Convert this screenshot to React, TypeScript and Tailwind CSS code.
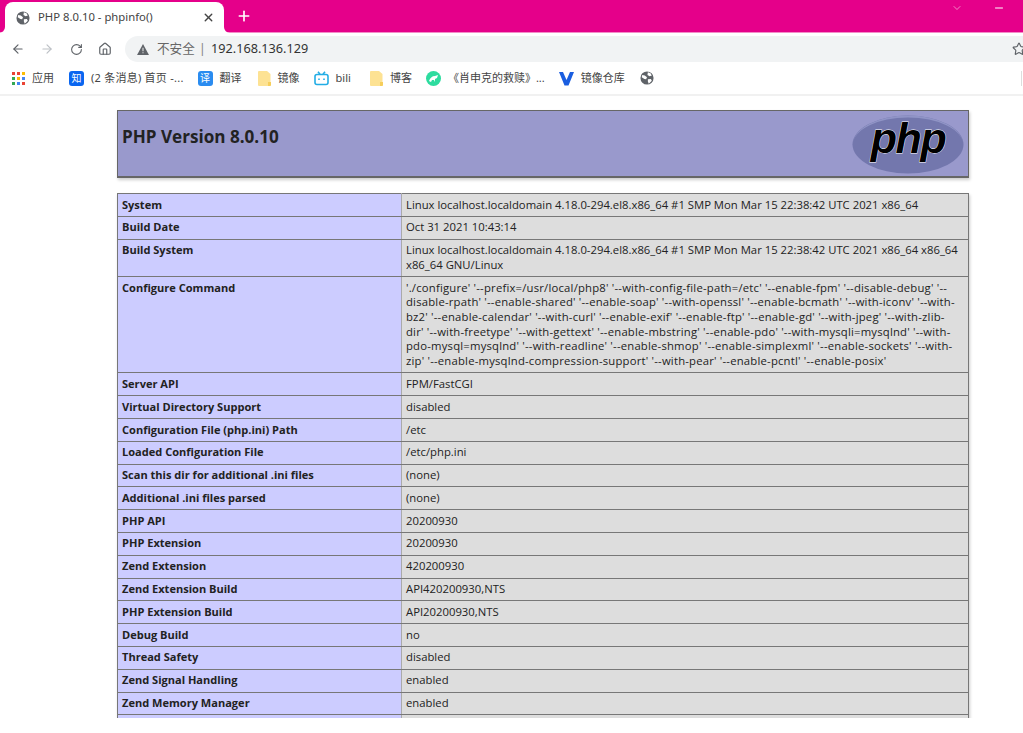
import React from "react";
import { ArrowLeft, ArrowRight, RotateCw, Home, Star, Plus, X, Minus, ChevronDown } from "lucide-react";

const cjk = "font-['Noto_Sans','Noto_Sans_CJK_SC',sans-serif]";

const rows: [string, string][] = [
  ["System", "Linux localhost.localdomain 4.18.0-294.el8.x86_64 #1 SMP Mon Mar 15 22:38:42 UTC 2021 x86_64"],
  ["Build Date", "Oct 31 2021 10:43:14"],
  ["Build System", "Linux localhost.localdomain 4.18.0-294.el8.x86_64 #1 SMP Mon Mar 15 22:38:42 UTC 2021 x86_64 x86_64 x86_64 GNU/Linux"],
  ["Configure Command", "'./configure' '--prefix=/usr/local/php8' '--with-config-file-path=/etc' '--enable-fpm' '--disable-debug' '--disable-rpath' '--enable-shared' '--enable-soap' '--with-openssl' '--enable-bcmath' '--with-iconv' '--with-bz2' '--enable-calendar' '--with-curl' '--enable-exif' '--enable-ftp' '--enable-gd' '--with-jpeg' '--with-zlib-dir' '--with-freetype' '--with-gettext' '--enable-mbstring' '--enable-pdo' '--with-mysqli=mysqlnd' '--with-pdo-mysql=mysqlnd' '--with-readline' '--enable-shmop' '--enable-simplexml' '--enable-sockets' '--with-zip' '--enable-mysqlnd-compression-support' '--with-pear' '--enable-pcntl' '--enable-posix'"],
  ["Server API", "FPM/FastCGI"],
  ["Virtual Directory Support", "disabled"],
  ["Configuration File (php.ini) Path", "/etc"],
  ["Loaded Configuration File", "/etc/php.ini"],
  ["Scan this dir for additional .ini files", "(none)"],
  ["Additional .ini files parsed", "(none)"],
  ["PHP API", "20200930"],
  ["PHP Extension", "20200930"],
  ["Zend Extension", "420200930"],
  ["Zend Extension Build", "API420200930,NTS"],
  ["PHP Extension Build", "API20200930,NTS"],
  ["Debug Build", "no"],
  ["Thread Safety", "disabled"],
  ["Zend Signal Handling", "enabled"],
  ["Zend Memory Manager", "enabled"],
  ["\u00a0", "\u00a0"],
];

const Globe = ({ size = 14 }: { size?: number }) => (
  <svg width={size} height={size} viewBox="0 0 16 16">
    <circle cx="8" cy="8" r="7.5" fill="#5f6368" />
    <path d="M2.5 4.5l3 .5 2.5 2-1 2.5-2-.5-3-2zM9 1.5l3 1 1.5 2.5-2.5 1-2.5-1.5zM9 9.5l3.5-.5 1 2-3.5 3.5-1-2.5z" fill="#fff" />
  </svg>
);

const Folder = () => (
  <svg width="13" height="15" viewBox="0 0 13 15">
    <path d="M1 0h8l3.5 3v11a1 1 0 0 1-1 1H1a1 1 0 0 1-1-1V1a1 1 0 0 1 1-1z" fill="#fde293" />
    <path d="M10 11h3v3a1 1 0 0 1-1 1h-2z" fill="#f6ce5b" />
  </svg>
);

const Apps = () => (
  <div className="grid grid-cols-3 gap-[2px] w-[13px]">
    {["#ea4335", "#ea4335", "#fbbc04", "#34a853", "#fbbc04", "#4285f4", "#34a853", "#4285f4", "#ea4335"].map((c, i) => (
      <span key={i} className="w-[3px] h-[3px]" style={{ background: c }} />
    ))}
  </div>
);

const Square = ({ text, color }: { text: string; color: string }) => (
  <span className={`w-[15px] h-[15px] rounded-[3px] text-white text-[10px] leading-[15px] text-center ${color}`}>{text}</span>
);

const Bili = () => (
  <svg width="15" height="15" viewBox="0 0 15 15" fill="none" stroke="#23ade5" strokeWidth="1.6">
    <rect x="1" y="3.5" width="13" height="10" rx="2" />
    <path d="M4 .8l2 2.4M11 .8L9 3.2M5 7.5v1.5M10 7.5v1.5" />
  </svg>
);

const Mint = () => (
  <svg width="15" height="15" viewBox="0 0 15 15">
    <circle cx="7.5" cy="7.5" r="7.5" fill="#2ddc9f" />
    <path d="M3 10c1-3 3-5 6-5l3-1-1 3-2 1 0 3-1-2-2 0-1 2z" fill="#fff" />
  </svg>
);

const Vee = () => (
  <svg width="15" height="15" viewBox="0 0 15 15">
    <path d="M0 1h4l3.5 8L11 1h4L9.5 14.5h-4z" fill="#1a5ee0" />
  </svg>
);

const Bookmark = ({ icon, label, className, labelClass }: { icon: React.ReactNode; label?: string; className: string; labelClass?: string }) => (
  <div className={`flex items-center gap-[7px] text-[11px] text-[#444] whitespace-nowrap ${className}`}>
    {icon}
    {label && <span className={labelClass}>{label}</span>}
  </div>
);

const PhpLogo = () => (
  <svg width="112" height="59" viewBox="0 0 112 59">
    <ellipse cx="56" cy="29.5" rx="55.5" ry="29" fill="#7377ad" />
    <path d="M1 29.5a55 29 0 0 1 110 0a55 27 0 0 0-110 0z" fill="#9094c6" />
    <text x="56" y="38" textAnchor="middle" fontFamily="'Liberation Sans', sans-serif" fontStyle="italic" fontWeight="700" fontSize="43" letterSpacing="-1.5" fill="#000" stroke="#fff" strokeWidth="0.8" paintOrder="stroke">php</text>
  </svg>
);

export default function App() {
  return (
    <div className={`w-[1023px] h-[733px] overflow-hidden bg-white flex flex-col ${cjk}`}>
      {/* tab strip */}
      <div className="h-[33px] bg-[#e5008a] border-b border-[#f48cc8] flex items-end relative shrink-0">
        <div className="ml-[5px] w-[219px] h-[31px] -mb-px bg-white rounded-t-[8px] flex items-center pl-[11px] pr-[9px] gap-[7px] relative">
          <svg width="6" height="6" viewBox="0 0 6 6" className="absolute bottom-0 -left-[6px]"><path d="M6 0v6H0a6 6 0 0 0 6-6z" fill="#fff" /></svg>
          <svg width="6" height="6" viewBox="0 0 6 6" className="absolute bottom-0 -right-[6px]"><path d="M0 0v6h6a6 6 0 0 1-6-6z" fill="#fff" /></svg>
          <Globe size={14} />
          <span className="text-[11.3px] text-[#444] flex-1 ml-[1px]">PHP 8.0.10 - phpinfo()</span>
          <X size={13} strokeWidth={2.5} className="text-[#444]" />
        </div>
        <Plus size={16} strokeWidth={2.5} className="text-white ml-[12px] mb-[8px]" />
        <div className="ml-auto flex items-center gap-[30px] mb-[18px] pr-[18px]">
          <ChevronDown size={12} strokeWidth={1.5} className="text-[#f7b2d9]" />
          <Minus size={12} className="text-white" />
        </div>
      </div>
      {/* toolbar */}
      <div className="h-[26px] mt-[3px] flex items-center shrink-0 pl-[11px]">
        <ArrowLeft size={14} className="text-[#5f6368]" />
        <ArrowRight size={14} className="text-[#bdc1c6] ml-[15px]" />
        <RotateCw size={13} className="text-[#5f6368] ml-[16px]" />
        <Home size={14} className="text-[#5f6368] ml-[15px]" />
        <div className="ml-[13px] flex-1 h-[26px] bg-[#f1f3f4] rounded-l-full flex items-center pl-[12px] overflow-hidden relative">
          <svg width="12" height="11" viewBox="0 0 13 12"><path d="M6.5 0L13 12H0z" fill="#5f6368" /><path d="M6 4h1v4H6zM6 9h1v1H6z" fill="#fff" /></svg>
          <span className="text-[12.6px] text-[#666] ml-[8px]">不安全</span>
          <span className="text-[13px] text-[#888] ml-[4px]">|</span>
          <span className="text-[12.7px] text-[#333] ml-[5px]">192.168.136.129</span>
          <Star size={14} className="text-[#5f6368] ml-auto -mr-[3px]" />
        </div>
      </div>
      {/* bookmarks */}
      <div className="h-[34px] flex items-center shrink-0 border-b-2 border-[#f1f1f1] relative">
        <Bookmark className="ml-[12px]" icon={<Apps />} label="应用" />
        <Bookmark className="ml-[15px]" icon={<Square text="知" color="bg-[#0a66f0]" />} label="(2 条消息) 首页 -..." labelClass="tracking-[0.25px]" />
        <Bookmark className="ml-[14px]" icon={<Square text="译" color="bg-[#2a8cf0]" />} label="翻译" />
        <Bookmark className="ml-[16px]" icon={<Folder />} label="镜像" />
        <Bookmark className="ml-[14px]" icon={<Bili />} label="bili" />
        <Bookmark className="ml-[19px]" icon={<Folder />} label="博客" />
        <Bookmark className="ml-[14px]" icon={<Mint />} label="《肖申克的救赎》..." />
        <Bookmark className="ml-[14px]" icon={<Vee />} label="镜像仓库" />
        <Bookmark className="ml-[15px]" icon={<Globe size={14} />} />
        <div className="ml-auto mr-[1px] w-px h-[15px] bg-[#ddd]" />
      </div>
      {/* page */}
      <div className="h-[622px] shrink-0 overflow-hidden pt-[14px]">
        <div className="w-[852px] ml-[117px] text-[#222] font-['Open_Sans','Noto_Sans',sans-serif]">
          <div className="h-[68px] bg-[#9999cc] border border-[#666] border-b-2 shadow-[1px_2px_3px_#ccc] flex justify-between pl-[4px] pr-[4px] pt-[4px]">
            <h1 className="text-[17.1px] font-bold leading-[44px] h-fit">PHP Version 8.0.10</h1>
            <PhpLogo />
          </div>
          <table className="mt-[15px] w-[852px] table-fixed border-collapse text-[11.3px] leading-[14.7px] shadow-[1px_2px_3px_#ccc]">
            <colgroup>
              <col className="w-[284px]" />
              <col />
            </colgroup>
            <tbody>
              {rows.map(([k, v], i) => (
                <tr key={i}>
                  <td className="border border-[#777] border-r-[#aaa] bg-[#ccccff] font-bold text-[11.05px] align-top pl-[4px] pr-[5px] pt-[3.5px] pb-[3.6px]">{k}</td>
                  <td className={`border border-[#777] bg-[#dddddd] align-top pl-[4px] pt-[3.5px] pb-[3.6px] break-words ${k === "Configure Command" ? "tracking-[0.2px] pr-[9px]" : "pr-[5px]"}`}>{v}</td>
                </tr>
              ))}
            </tbody>
          </table>
        </div>
      </div>
    </div>
  );
}
